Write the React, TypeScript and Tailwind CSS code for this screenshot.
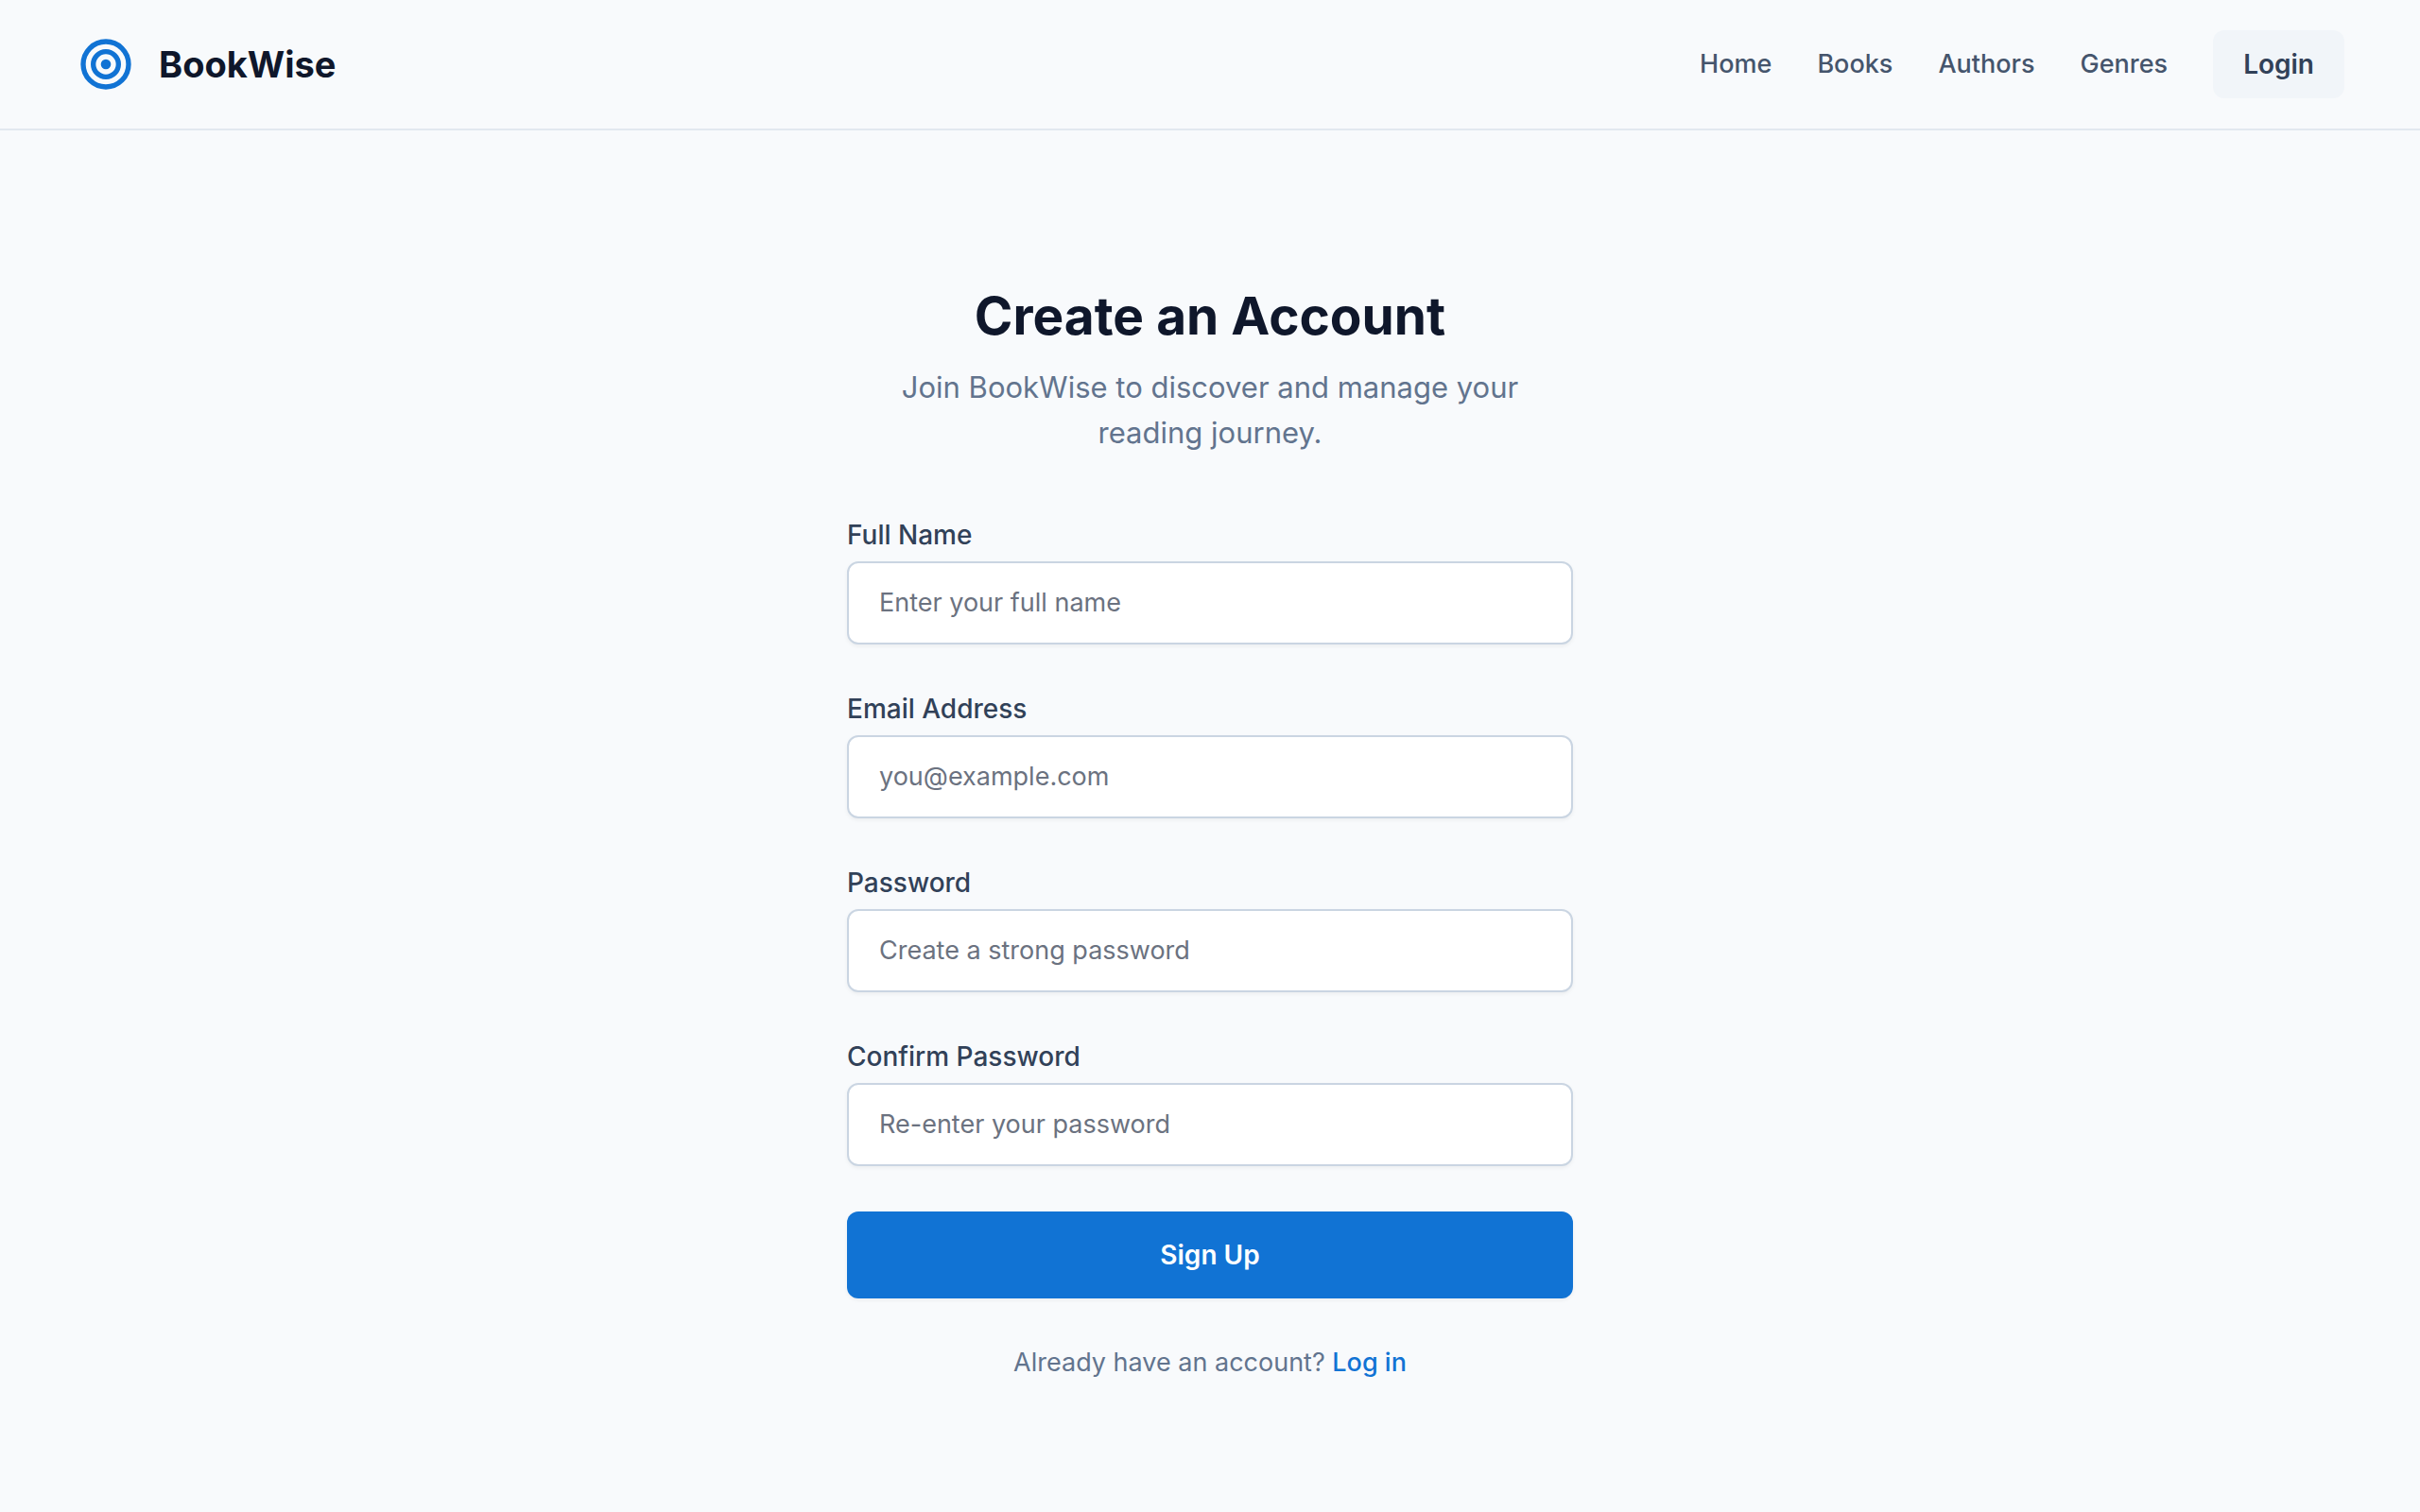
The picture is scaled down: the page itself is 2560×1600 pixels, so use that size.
const navLinks = ["Home", "Books", "Authors", "Genres"];

const fields = [
  { id: "full-name", label: "Full Name", type: "text", placeholder: "Enter your full name", autoComplete: "name" },
  { id: "email", label: "Email Address", type: "email", placeholder: "you@example.com", autoComplete: "email" },
  { id: "password", label: "Password", type: "password", placeholder: "Create a strong password", autoComplete: "new-password" },
  { id: "confirm-password", label: "Confirm Password", type: "password", placeholder: "Re-enter your password", autoComplete: "new-password" },
];

function Logo() {
  return (
    <svg className="size-16 text-[#1173d4]" viewBox="0 0 24 24" fill="none" aria-hidden="true">
      <circle cx="12" cy="12" r="9" stroke="currentColor" strokeWidth="2" />
      <circle cx="12" cy="12" r="5" stroke="currentColor" strokeWidth="2" />
      <circle cx="12" cy="12" r="2" fill="currentColor" />
    </svg>
  );
}

function Header() {
  return (
    <header className="flex items-center justify-between border-b-2 border-slate-200 px-20 py-8">
      <div className="flex items-center gap-6">
        <Logo />
        <span className="text-[38px] leading-[48px] font-bold text-slate-900">BookWise</span>
      </div>
      <nav className="flex items-center gap-12 text-[27px] leading-10">
        {navLinks.map((link) => (
          <a key={link} href="#" className="font-medium text-slate-600">
            {link}
          </a>
        ))}
        <a href="#" className="rounded-xl bg-slate-100 px-8 py-4 text-[28px] leading-10 font-semibold text-slate-700">
          Login
        </a>
      </nav>
    </header>
  );
}

function SignUpForm() {
  return (
    <form className="mt-16 flex flex-col gap-12" onSubmit={(e) => e.preventDefault()}>
      {fields.map((f) => (
        <div key={f.id} className="flex flex-col gap-2">
          <label htmlFor={f.id} className="text-[28px] leading-10 font-medium text-slate-700">
            {f.label}
          </label>
          <input
            id={f.id}
            name={f.id}
            type={f.type}
            placeholder={f.placeholder}
            autoComplete={f.autoComplete}
            className="w-full rounded-xl border-2 border-slate-300 bg-white px-8 py-[22px] text-[27px] leading-10 text-slate-900 shadow-[0_2px_4px_rgba(0,0,0,0.05)] placeholder:text-[#6b7280]"
          />
        </div>
      ))}
      <button
        type="submit"
        className="rounded-xl bg-[#1173d4] px-8 py-[26px] text-[28px] leading-10 font-semibold text-white shadow-[0_2px_4px_rgba(0,0,0,0.05)]"
      >
        Sign Up
      </button>
    </form>
  );
}

export default function App() {
  return (
    <div className="min-h-screen bg-slate-50 font-['Inter',sans-serif]">
      <Header />
      <main className="mx-auto w-full max-w-[768px] pt-40 pb-32">
        <div className="text-center">
          <h1 className="text-[55px] leading-[72px] font-bold text-slate-900">Create an Account</h1>
          <p className="mt-4 text-[31px] leading-[48px] text-slate-500">
            Join BookWise to discover and manage your reading journey.
          </p>
        </div>
        <SignUpForm />
        <p className="mt-12 text-center text-[27px] leading-10 text-slate-500">
          Already have an account?{" "}
          <a href="#" className="font-medium text-[#1173d4]">
            Log in
          </a>
        </p>
      </main>
    </div>
  );
}
